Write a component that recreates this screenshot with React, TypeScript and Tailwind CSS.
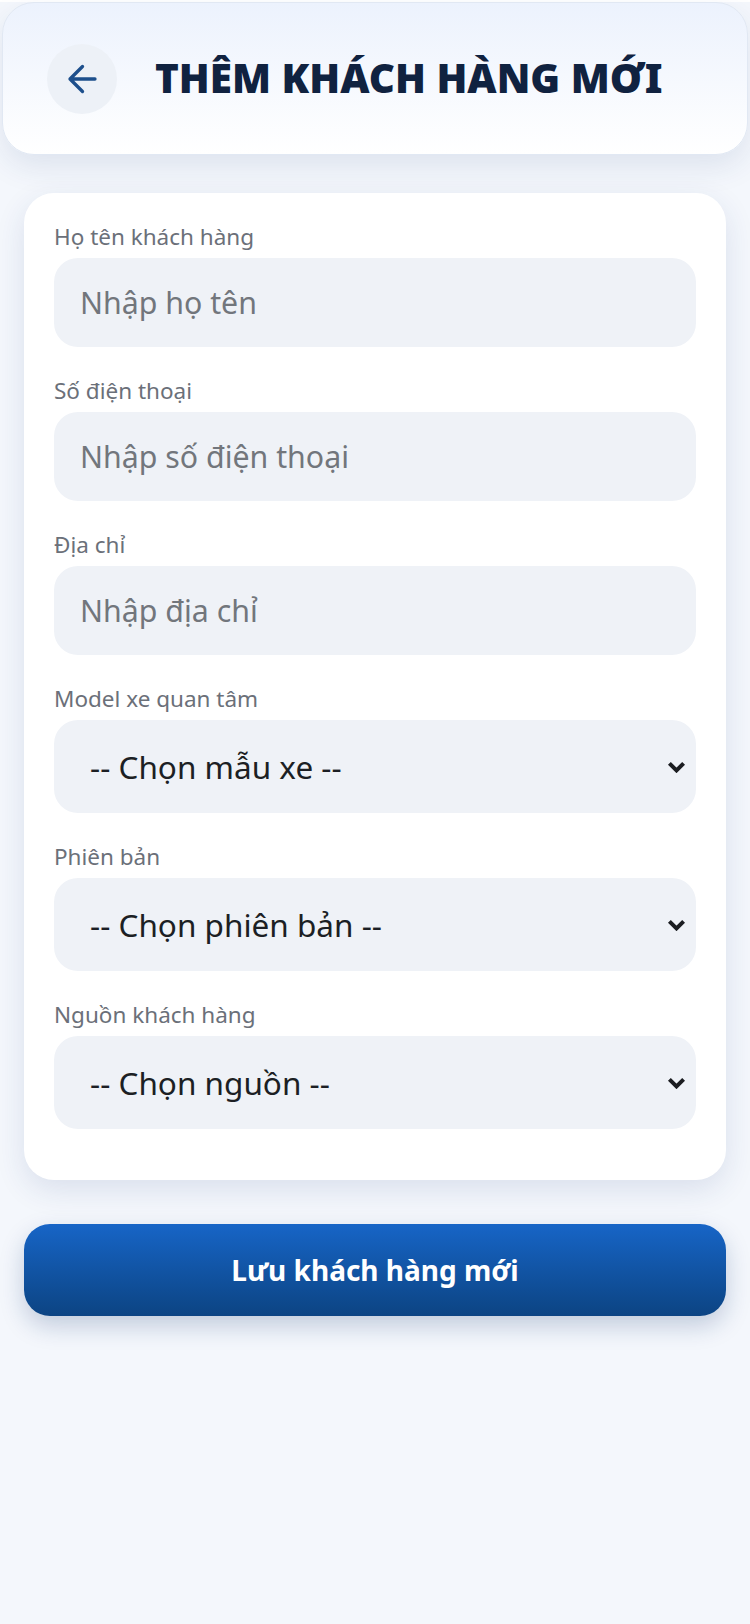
import { useState } from 'react';

const MODELS = ['VF 3', 'VF 5', 'VF 6', 'VF 7', 'VF 8', 'VF 9'];
const VERSIONS = ['Eco', 'Plus'];
const SOURCES = ['Showroom', 'Facebook', 'Zalo', 'Giới thiệu'];

function Chevron() {
  return (
    <svg
      width="19"
      height="12"
      viewBox="0 0 19 12"
      className="pointer-events-none absolute right-[10px] top-1/2 -translate-y-1/2"
    >
      <path d="M2.4 2.4 9.5 9.4 16.6 2.4" fill="none" stroke="#1b1d21" strokeWidth="4" />
    </svg>
  );
}

function Field({ label, children }: { label: string; children: React.ReactNode }) {
  return (
    <div className="flex flex-col">
      <label className="mb-[6px] text-[22.5px] leading-[30px] text-[#6b7079]">{label}</label>
      {children}
    </div>
  );
}

function TextInput({ placeholder, value, onChange }: { placeholder: string; value: string; onChange: (v: string) => void }) {
  return (
    <input
      value={value}
      onChange={e => onChange(e.target.value)}
      placeholder={placeholder}
      className="h-[89px] w-full rounded-[24px] bg-[#eff2f7] px-[26px] text-[30.3px] text-[#1c1f24] outline-none placeholder:text-[#72767c]"
    />
  );
}

function Select({ placeholder, options, value, onChange }: { placeholder: string; options: string[]; value: string; onChange: (v: string) => void }) {
  return (
    <div className="relative">
      <select
        value={value}
        onChange={e => onChange(e.target.value)}
        className="h-[93px] w-full appearance-none rounded-[24px] bg-[#eff2f7] pl-[36px] pr-[40px] text-[31.5px] text-[#1c1f24] outline-none"
      >
        <option value="">{placeholder}</option>
        {options.map(o => (
          <option key={o} value={o}>
            {o}
          </option>
        ))}
      </select>
      <Chevron />
    </div>
  );
}

export default function App() {
  const [name, setName] = useState('');
  const [phone, setPhone] = useState('');
  const [address, setAddress] = useState('');
  const [model, setModel] = useState('');
  const [version, setVersion] = useState('');
  const [source, setSource] = useState('');

  return (
    <div className="min-h-screen bg-[#f4f7fc] pb-10 font-['Noto_Sans',sans-serif]">
      <header className="mx-[2px] mt-[2px] flex h-[153px] items-center gap-[38px] rounded-[32px] border border-[#e1e8f3] bg-gradient-to-b from-[#ecf2fd] to-white pl-[44px] shadow-[0_12px_30px_rgba(30,60,120,0.10)]">
        <button className="flex h-[70px] w-[70px] items-center justify-center rounded-full bg-[#edf1f7]">
          <svg width="30" height="30" viewBox="0 0 30 30">
            <path
              d="M15.5 2.5 3 15l12.5 12.5M3 15h25"
              fill="none"
              stroke="#1d4f8c"
              strokeWidth="3.3"
              strokeLinecap="round"
              strokeLinejoin="round"
            />
          </svg>
        </button>
        <h1 className="text-[40.4px] font-black leading-none text-[#102240]">THÊM KHÁCH HÀNG MỚI</h1>
      </header>

      <main className="px-[24px] pt-[38px]">
        <div className="flex flex-col gap-[29px] rounded-[30px] bg-white px-[30px] pb-[51px] pt-[29px] shadow-[0_10px_30px_rgba(30,60,120,0.12)]">
          <Field label="Họ tên khách hàng">
            <TextInput placeholder="Nhập họ tên" value={name} onChange={setName} />
          </Field>
          <Field label="Số điện thoại">
            <TextInput placeholder="Nhập số điện thoại" value={phone} onChange={setPhone} />
          </Field>
          <Field label="Địa chỉ">
            <TextInput placeholder="Nhập địa chỉ" value={address} onChange={setAddress} />
          </Field>
          <Field label="Model xe quan tâm">
            <Select placeholder="-- Chọn mẫu xe --" options={MODELS} value={model} onChange={setModel} />
          </Field>
          <Field label="Phiên bản">
            <Select placeholder="-- Chọn phiên bản --" options={VERSIONS} value={version} onChange={setVersion} />
          </Field>
          <Field label="Nguồn khách hàng">
            <Select placeholder="-- Chọn nguồn --" options={SOURCES} value={source} onChange={setSource} />
          </Field>
        </div>

        <button className="mt-[44px] h-[92px] w-full rounded-[26px] bg-gradient-to-b from-[#1765c7] to-[#0c4483] text-[28px] font-bold text-white shadow-[0_10px_24px_rgba(12,50,110,0.22)]">
          Lưu khách hàng mới
        </button>
      </main>
    </div>
  );
}
